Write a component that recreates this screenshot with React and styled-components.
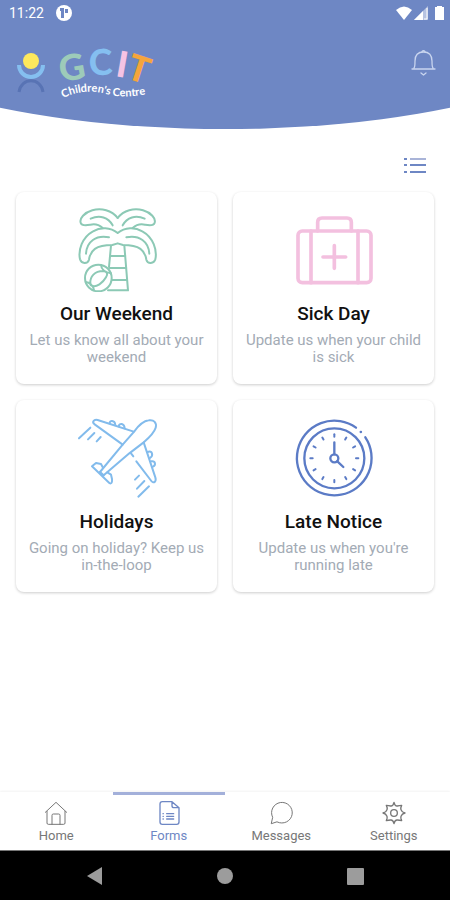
import React, { useState } from 'react';
import styled, { createGlobalStyle } from 'styled-components';

const GlobalStyle = createGlobalStyle`
  * {
    box-sizing: border-box;
  }

  body {
    margin: 0;
    background: #fff;
    font-family: Roboto, "Liberation Sans", sans-serif;
  }
`;

const Screen = styled.div`
  display: flex;
  flex-direction: column;
  min-height: 100vh;
`;

const Header = styled.header`
  height: 129px;
  background: #6e87c4;
  color: #fff;
  clip-path: ellipse(91% 100% at 50% 0);
`;

const StatusBar = styled.div`
  display: flex;
  align-items: center;
  justify-content: space-between;
  height: 26px;
  padding: 0 6px 0 9px;
`;

const StatusGroup = styled.div`
  display: flex;
  align-items: center;
  gap: ${props => props.$gap}px;
  font-size: 14px;
  line-height: 16px;
`;

const Brand = styled.div`
  display: flex;
  justify-content: space-between;
  align-items: flex-start;
  padding: 0 14px 0 16px;
`;

const IconButton = styled.button`
  display: flex;
  padding: 0;
  border: none;
  background: none;
  cursor: pointer;
`;

const BellButton = styled(IconButton)`
  margin-top: 23px;
`;

const Content = styled.main`
  flex: 1;
  padding: 0 16px 24px;
`;

const Toolbar = styled.div`
  display: flex;
  justify-content: flex-end;
  align-items: center;
  height: 63px;
  padding: 8px 8px 0 0;
`;

const CardGrid = styled.div`
  display: grid;
  grid-template-columns: 1fr 1fr;
  gap: 16px;
`;

const Card = styled.button`
  display: flex;
  flex-direction: column;
  align-items: center;
  padding: 16px 12px 18px;
  border: none;
  border-radius: 8px;
  background: #fff;
  box-shadow: 0 1px 3px rgba(0, 0, 0, 0.2);
  font-family: inherit;
  text-align: center;
  cursor: pointer;
`;

const CardTitle = styled.span`
  margin: 10px 0 6px;
  font-size: 19px;
  font-weight: 500;
  line-height: 24px;
  color: #111;
`;

const CardText = styled.span`
  font-size: 15px;
  line-height: 17px;
  color: #a3abb5;
`;

const TabBar = styled.nav`
  display: flex;
  background: #fff;
  box-shadow: 0 -1px 2px rgba(0, 0, 0, 0.05);
`;

const Tab = styled.a`
  flex: 1;
  display: flex;
  flex-direction: column;
  align-items: center;
  gap: 3px;
  padding: 6px 0;
  border-top: 3px solid ${props => props.$active ? '#a3b0da' : 'transparent'};
  color: ${props => props.$active ? '#6e87c4' : '#777'};
  font-size: 13px;
  line-height: 16px;
  text-decoration: none;
`;

const SystemBar = styled.div`
  display: flex;
  height: 50px;
  padding: 0 30px;
  background: #000;
  border-top: 1px solid #777;
`;

const SystemButton = styled(IconButton)`
  flex: 1;
  align-items: center;
  justify-content: center;
`;

const LogoLetter = styled.text`
  font-family: Lato, sans-serif;
  font-size: 36px;
  font-weight: 900;
  text-anchor: middle;
`;

const LogoCaption = styled.text`
  font-family: Lato, sans-serif;
  font-size: 11px;
  font-weight: 700;
  fill: #fff;
`;

function Logo() {
  return (
    <svg width="160" height="84" viewBox="16 26 160 84" role="img" aria-label="GCIT Children's Centre">
      <path d="M19 65a12 12 0 0 0 24 0" fill="none" stroke="#85bff0" strokeWidth="4" />
      <circle cx="31" cy="61" r="8" fill="#fde85c" />
      <path d="M19 92c2-15 22-15 24 0" fill="none" stroke="#5873b4" strokeWidth="3" />
      <LogoLetter transform="translate(74 80) rotate(-10)" fill="#9dcbb9">G</LogoLetter>
      <LogoLetter transform="translate(101 75) rotate(-2)" fill="#85bff0">C</LogoLetter>
      <LogoLetter transform="translate(120 77) rotate(10)" fill="#f5c3e4">I</LogoLetter>
      <LogoLetter transform="translate(135 81) rotate(18)" fill="#f5a53c">T</LogoLetter>
      <path id="caption-line" d="M63 98C75 92 90 90 102 93S122 99 154 93" fill="none" />
      <LogoCaption>
        <textPath href="#caption-line">Children's Centre</textPath>
      </LogoCaption>
    </svg>
  );
}

function PalmIcon() {
  return (
    <svg width="84" height="84" viewBox="194 69 252 252" fill="none" stroke="#8cc9b5" strokeWidth="6" strokeLinecap="round" strokeLinejoin="round">
      <path d="M322 99C304 76 273 68 246 76C222 83 207 100 211 113C214 124 229 121 240 119C253 116 265 118 277 129" />
      <path d="M322 99C340 76 371 68 398 76C422 83 437 100 433 113C430 124 415 121 404 119C391 116 379 118 367 129" />
      <path d="M241 101C268 89 294 97 307 121M403 101C376 89 350 97 337 121" />
      <path d="M322 144C300 126 270 126 248 139C215 157 203 196 209 223C213 237 232 238 236 224C240 196 256 180 306 180L322 175L338 180C388 180 404 196 408 224C412 238 431 237 435 223C441 196 429 157 396 139C374 126 344 126 322 144" />
      <path d="M227 206C229 170 257 149 296 157M417 206C415 170 387 149 348 157" />
      <path d="M302 182L296 246M342 182L353 316H293M301 213H345M298 249H348M305 285H350" />
      <circle cx="264" cy="279" r="40" />
      <path d="M240 296C238 274 254 258 278 258C292 259 293 267 287 277C277 295 258 306 247 303C242 302 240 300 240 296M272 240C273 252 284 262 302 265M226 291C238 292 249 302 251 316" />
    </svg>
  );
}

function FirstAidIcon() {
  return (
    <svg width="84" height="84" viewBox="190 69 252 252" fill="none" stroke="#f3c0df" strokeWidth="11" strokeLinecap="round" strokeLinejoin="round">
      <rect x="208" y="138" width="219" height="155" rx="13" />
      <path d="M267 138V112q0-13 13-13H355q13 0 13 13V138" />
      <path d="M247 138V293M388 138V293M317 182V250M283 216H351" />
    </svg>
  );
}

function PlaneIcon() {
  return (
    <svg width="84" height="84" viewBox="194 69 252 252" fill="none" stroke="#82bbec" strokeWidth="6" strokeLinecap="round" strokeLinejoin="round">
      <path d="M269 237L337 155L372 115C386 96 400 84 415 82C431 79 440 90 436 104C431 121 416 134 400 148L357 181L280 247" />
      <path d="M370 116L262 81C250 78 244 88 253 94L337 155" />
      <path d="M298 91C297 82 313 80 315 96M325 100C327 89 342 91 343 106" />
      <path d="M400 148L435 253C439 266 430 273 423 264L378 205M362 181L369 190" />
      <path d="M412 177C426 171 430 188 419 195M423 205C436 203 437 217 428 221" />
      <path d="M278 224L272 213L257 210L245 220L297 270C304 274 306 267 305 258L302 245L291 238M269 237L280 247" />
      <path d="M206 136L240 104M233 139L252 120M259 145L271 132M374 260L386 248M380 287L402 264M384 311L416 280" />
    </svg>
  );
}

function ClockIcon() {
  const ticks = Array.from({ length: 12 }, (_, i) => i * 30);

  return (
    <svg width="84" height="84" viewBox="190 69 252 252" fill="none" stroke="#5b7bc6" strokeWidth="7" strokeLinecap="round">
      <path d="M382 104A112 112 0 1 0 410 133" />
      <path d="M396 117h1" />
      <circle cx="317" cy="196" r="90" />
      <circle cx="317" cy="196" r="12" />
      <path d="M317 184V148M326 205L344 222" />
      {ticks.map(angle => (
        <path key={angle} d="M317 124V131" strokeWidth="6" transform={`rotate(${angle} 317 196)`} />
      ))}
    </svg>
  );
}

function HomeIcon() {
  return (
    <svg width="24" height="24" viewBox="133 63 72 72" fill="none" stroke="currentColor" strokeWidth="3" strokeLinecap="round" strokeLinejoin="round">
      <path d="M137 97L169 67L201 97M142 94V129q0 4 4 4H192q4 0 4-4V94M157 133V106q0-4 4-4H177q4 0 4 4V133" />
    </svg>
  );
}

function FormsIcon() {
  return (
    <svg width="24" height="24" viewBox="471 63 72 72" fill="none" stroke="currentColor" strokeWidth="4" strokeLinecap="round" strokeLinejoin="round">
      <path d="M516 65H487q-7 0-7 7V126q0 7 7 7H530q7 0 7-7V83L516 65V77q0 6 6 6H537" />
      <path d="M489 101h1M489 109h1M489 117h1M500 101H521M500 109H521M500 117H521" />
    </svg>
  );
}

function MessagesIcon() {
  return (
    <svg width="24" height="24" viewBox="133 63 72 72" fill="none" stroke="currentColor" strokeWidth="3" strokeLinecap="round" strokeLinejoin="round">
      <path d="M140 130L144 112A31 31 0 1 1 158 126Z" />
    </svg>
  );
}

function SettingsIcon() {
  return (
    <svg width="24" height="24" viewBox="475 63 72 72" fill="none" stroke="currentColor" strokeWidth="4" strokeLinejoin="round">
      <path d="M511 67Q514 79 521 78Q527 77 534 76Q530 84 532 89Q535 97 544 99Q535 101 532 109Q530 114 534 122Q527 121 521 120Q514 119 511 131Q508 119 501 120Q495 121 488 122Q492 114 490 109Q487 101 478 99Q487 97 490 89Q492 84 488 76Q495 77 501 78Q508 79 511 67Z" />
      <circle cx="511" cy="99" r="10" />
    </svg>
  );
}

const forms = [
  { title: 'Our Weekend', text: 'Let us know all about your weekend', Icon: PalmIcon },
  { title: 'Sick Day', text: 'Update us when your child is sick', Icon: FirstAidIcon },
  { title: 'Holidays', text: 'Going on holiday? Keep us in-the-loop', Icon: PlaneIcon },
  { title: 'Late Notice', text: "Update us when you're running late", Icon: ClockIcon },
];

const tabs = [
  { label: 'Home', Icon: HomeIcon },
  { label: 'Forms', Icon: FormsIcon },
  { label: 'Messages', Icon: MessagesIcon },
  { label: 'Settings', Icon: SettingsIcon },
];

function App() {
  const [activeTab, setActiveTab] = useState('Forms');

  return (
    <Screen>
      <GlobalStyle />
      <Header>
        <StatusBar>
          <StatusGroup $gap={12}>
            <span>11:22</span>
            <svg width="16" height="16" viewBox="0 0 16 16">
              <circle cx="8" cy="8" r="8" fill="#fff" />
              <path d="M4 3H8V13H5V6H4zM9 4H12V8H9z" fill="#6e87c4" />
            </svg>
          </StatusGroup>
          <StatusGroup $gap={2}>
            <svg width="16" height="14" viewBox="0 0 16 14">
              <path d="M0 4Q8-3 16 4L8 14z" fill="#fff" />
            </svg>
            <svg width="14" height="14" viewBox="0 0 14 14">
              <path d="M0 14L14 0V14z" fill="#b7c3e1" />
              <path d="M0 14L9 5V14z" fill="#fff" />
              <path d="M13 2V13H10" fill="none" stroke="#fff" />
            </svg>
            <svg width="14" height="14" viewBox="-5 0 14 14">
              <path d="M2 0H7V1H9V14H0V1H2z" fill="#fff" />
            </svg>
          </StatusGroup>
        </StatusBar>
        <Brand>
          <Logo />
          <BellButton aria-label="Notifications">
            <svg width="25" height="28" viewBox="0 0 25 28" fill="none" stroke="#c9d5ef" strokeWidth="1.300" strokeLinecap="round" strokeLinejoin="round">
              <path d="M1 20H24M3 19C4 18 4 16 4 12C4 6 7 3 12.500 3S21 6 21 12C21 16 21 18 22 19" />
              <path d="M11 2.500Q12.500 1 14 2.500M10 24L12.500 26L15 24" />
            </svg>
          </BellButton>
        </Brand>
      </Header>

      <Content>
        <Toolbar>
          <IconButton aria-label="List view">
            <svg width="22" height="18" viewBox="0 0 22 18" stroke="#6e87c4" strokeWidth="2">
              <path d="M0 3H3M0 9H3M0 16H3M6 9H22M6 16H22" />
              <path d="M6 3H22" stroke="#a9b4d8" />
            </svg>
          </IconButton>
        </Toolbar>
        <CardGrid>
          {forms.map(({ title, text, Icon }) => (
            <Card key={title}>
              <Icon />
              <CardTitle>{title}</CardTitle>
              <CardText>{text}</CardText>
            </Card>
          ))}
        </CardGrid>
      </Content>

      <TabBar>
        {tabs.map(({ label, Icon }) => (
          <Tab
            key={label}
            href={`#${label.toLowerCase()}`}
            $active={label === activeTab}
            onClick={() => setActiveTab(label)}
          >
            <Icon />
            {label}
          </Tab>
        ))}
      </TabBar>

      <SystemBar>
        <SystemButton aria-label="Back">
          <svg width="18" height="18" viewBox="0 0 18 18" fill="#9c9c9c">
            <path d="M1 9L16 0V18z" />
          </svg>
        </SystemButton>
        <SystemButton aria-label="Home screen">
          <svg width="18" height="18" viewBox="0 0 18 18" fill="#9c9c9c">
            <circle cx="9" cy="9" r="8" />
          </svg>
        </SystemButton>
        <SystemButton aria-label="Recent apps">
          <svg width="18" height="18" viewBox="0 0 18 18" fill="#9c9c9c">
            <rect x="1" y="1" width="17" height="17" rx="1" />
          </svg>
        </SystemButton>
      </SystemBar>
    </Screen>
  );
}

export default App;
